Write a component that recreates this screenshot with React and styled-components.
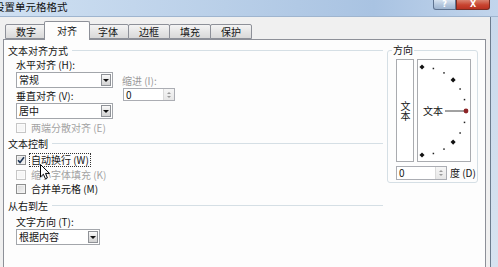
import React from "react";
import styled, { createGlobalStyle } from "styled-components";

const GlobalStyle = createGlobalStyle`
  html, body {
    margin: 0;
    padding: 0;
    background: #f0f0f0;
  }
  body {
    font-family: "Noto Sans CJK SC", "Liberation Sans", sans-serif;
    font-size: 10px;
    color: #141414;
  }
`;

const Window = styled.div`
  position: relative;
  width: 498px;
  height: 267px;
  overflow: hidden;
  display: flex;
  flex-direction: column;
  background: #f0f0f0;
`;

const TitleBar = styled.div`
  flex: none;
  height: 17px;
  display: flex;
  align-items: flex-start;
  background: linear-gradient(to right, #cfe0f2 0%, #b9cfe8 45%, #a9c3e2 75%, #c2d5ec 100%);
  border-bottom: 1px solid #9fb5cf;
  box-sizing: border-box;
`;

const Title = styled.div`
  flex: 1;
  margin-left: -6px;
  line-height: 13px;
  font-size: 10.5px;
  color: #111;
`;

const CaptionButton = styled.div`
  height: 10px;
  width: ${p => p.$w}px;
  box-sizing: border-box;
  border: 1px solid ${p => (p.$close ? "#7a2c22" : "#5f7390")};
  border-top: none;
  border-radius: ${p => (p.$close ? "0 0 3px 0" : "0 0 0 3px")};
  background: ${p =>
    p.$close
      ? "linear-gradient(#d9826f, #c8432f 55%, #b83222)"
      : "linear-gradient(#d6e2f0, #b3c6dd 55%, #9fb5d0)"};
  color: #fff;
  font-family: "DejaVu Sans", sans-serif;
  font-size: 8px;
  font-weight: bold;
  line-height: 9px;
  text-align: center;
  margin-right: ${p => (p.$close ? 8 : 0)}px;
`;

const Body = styled.div`
  flex: 1;
  display: flex;
  min-height: 0;
`;

const Main = styled.div`
  width: 490px;
  box-sizing: border-box;
  padding: 4px 4px 0 3px;
  display: flex;
  flex-direction: column;
`;

const RightFrame = styled.div`
  flex: 1;
  border-left: 1px solid #6c7c8e;
  background: linear-gradient(#c9d9eb, #d7e3f0);
`;

const TabStrip = styled.div`
  display: flex;
  align-items: flex-end;
  height: 18px;
  padding-left: 2px;
`;

const Tab = styled.div`
  position: relative;
  box-sizing: border-box;
  width: ${p => (p.$active ? 46 : 42)}px;
  height: ${p => (p.$active ? 19 : 15)}px;
  margin: ${p => (p.$active ? "0 -2px -1px -3px" : "0 0 0 -1px")};
  z-index: ${p => (p.$active ? 2 : 1)};
  border: 1px solid #8d9098;
  border-bottom: ${p => (p.$active ? "none" : "1px solid #8d9098")};
  border-radius: 2px 2px 0 0;
  background: ${p =>
    p.$active ? "#fdfdfd" : "linear-gradient(#f4f4f4, #e6e6e6 50%, #d9d9d9)"};
  display: flex;
  justify-content: center;
  align-items: ${p => (p.$active ? "flex-start" : "center")};
  padding-top: ${p => (p.$active ? 3 : 0)}px;
  line-height: 12px;
  &:first-child {
    margin-left: 0;
  }
`;

const Panel = styled.div`
  flex: 1;
  display: flex;
  border: 1px solid #8d9098;
  border-bottom: none;
  background: #fdfdfd;
  padding: 3px 0 0 4px;
`;

const LeftCol = styled.div`
  width: 375px;
  display: flex;
  flex-direction: column;
`;

const GroupHeader = styled.div`
  display: flex;
  align-items: center;
  height: 14px;
  gap: 4px;
  margin-top: ${p => p.$mt || 0}px;
  &::after {
    content: "";
    flex: 1;
    height: 1px;
    background: #d5dfe5;
  }
`;

const GroupBody = styled.div`
  padding-left: 8px;
  display: flex;
  flex-direction: column;
`;

const AlignRow = styled.div`
  display: flex;
`;

const Stack = styled.div`
  display: flex;
  flex-direction: column;
  padding-top: ${p => p.$pt || 0}px;
  margin-left: ${p => p.$ml || 0}px;
`;

const Label = styled.div`
  height: ${p => p.$h || 15}px;
  line-height: ${p => p.$h || 15}px;
  margin-top: ${p => p.$mt || 0}px;
  white-space: nowrap;
  color: ${p => (p.$muted ? "#9a9a9a" : "inherit")};
`;

const Field = styled.div`
  width: ${p => p.$w}px;
  height: 16px;
  box-sizing: border-box;
  border: 1px solid #a3a6ab;
  background: #fff;
  display: flex;
  align-items: center;
  padding-left: 2px;
`;

const FieldValue = styled.span`
  flex: 1;
  line-height: 14px;
`;

const DropButton = styled.div`
  width: 10px;
  height: 12px;
  margin-right: 1px;
  box-sizing: border-box;
  border: 1px solid #8f9297;
  background: linear-gradient(#fafafa, #e4e4e4 50%, #d3d3d3);
  display: flex;
  align-items: center;
  justify-content: center;
  &::before {
    content: "";
    border-left: 3px solid transparent;
    border-right: 3px solid transparent;
    border-top: 3px solid #111;
  }
`;

const SpinBox = styled.div`
  width: ${p => p.$w}px;
  height: ${p => p.$h}px;
  margin-left: ${p => p.$ml || 0}px;
  box-sizing: border-box;
  border: 1px solid #abadb3;
  background: #fff;
  display: flex;
  align-items: center;
  padding-left: 2px;
`;

const SpinArrows = styled.div`
  width: 11px;
  height: 100%;
  box-sizing: border-box;
  border-left: 1px solid #dadada;
  background: linear-gradient(#f6f6f6, #e6e6e6);
  display: flex;
  flex-direction: column;
  align-items: center;
  justify-content: center;
  gap: 2px;
`;

const Arrow = styled.span`
  width: 0;
  height: 0;
  border-left: 2.5px solid transparent;
  border-right: 2.5px solid transparent;
  ${p =>
    p.$up
      ? "border-bottom: 2.5px solid #9a9a9a;"
      : "border-top: 2.5px solid #9a9a9a;"}
`;

const CheckRow = styled.div`
  display: flex;
  align-items: center;
  gap: 4px;
  height: 14px;
  margin-top: ${p => p.$mt || 0}px;
  color: ${p => (p.$disabled ? "#a3a3a3" : "inherit")};
`;

const Box = styled.span`
  width: 10px;
  height: 10px;
  box-sizing: border-box;
  border: 1px solid ${p => (p.$disabled ? "#c6c6c6" : "#8e8f8f")};
  background: ${p =>
    p.$disabled ? "#f6f6f6" : "linear-gradient(135deg, #d8d8d8, #f5f5f5)"};
  box-shadow: inset 0 0 0 1px ${p => (p.$disabled ? "#fbfbfb" : "#f2f2f2")};
  display: flex;
  align-items: center;
  justify-content: center;
`;

const CheckText = styled.span`
  line-height: 12px;
  padding: 0 1px;
  margin-left: -1px;
  border: 1px dotted ${p => (p.$focus ? "#333" : "transparent")};
`;

const OrientGroup = styled.fieldset`
  margin: 0 0 0 4px;
  width: 91px;
  height: 140px;
  box-sizing: border-box;
  border: 1px solid #d5dfe5;
  border-radius: 3px;
  padding: 2px 0 3px 8px;
  align-self: flex-start;
`;

const Legend = styled.legend`
  padding: 0 1px;
  margin-left: -4px;
  line-height: 14px;
  font-size: 10px;
`;

const OrientRow = styled.div`
  display: flex;
  gap: 3px;
`;

const VerticalBox = styled.div`
  width: 18px;
  height: 103px;
  box-sizing: border-box;
  border: 1px solid #a9abaf;
  background: #fff;
  display: flex;
  align-items: center;
  justify-content: center;
`;

const VerticalText = styled.span`
  writing-mode: vertical-rl;
  line-height: 12px;
`;

const ArcBox = styled.div`
  width: 54px;
  height: 103px;
  box-sizing: border-box;
  border: 1px solid #a9abaf;
  background: #fff;
  svg {
    display: block;
  }
`;

const DegreeRow = styled.div`
  display: flex;
  align-items: center;
  margin-top: 3px;
  gap: 3px;
`;

const Cursor = styled.svg`
  position: absolute;
  left: 40px;
  top: 164px;
`;

const tabs = ["数字", "对齐", "字体", "边框", "填充", "保护"];

function Select({ width, value }) {
  return (
    <Field $w={width}>
      <FieldValue>{value}</FieldValue>
      <DropButton />
    </Field>
  );
}

function Spin({ width, height, value, ml }) {
  return (
    <SpinBox $w={width} $h={height} $ml={ml}>
      <FieldValue>{value}</FieldValue>
      <SpinArrows>
        <Arrow $up />
        <Arrow />
      </SpinArrows>
    </SpinBox>
  );
}

function Check({ label, checked, disabled, focus, mt }) {
  return (
    <CheckRow $disabled={disabled} $mt={mt}>
      <Box $disabled={disabled}>
        {checked && (
          <svg width="8" height="8" viewBox="0 0 8 8">
            <path d="M1 4.2 L3 6.4 L7 1.2" fill="none" stroke="#1d3557" strokeWidth="1.6" />
          </svg>
        )}
      </Box>
      <CheckText $focus={focus}>{label}</CheckText>
    </CheckRow>
  );
}

function Dial() {
  const cx = 4;
  const cy = 51;
  const r = 44;
  const dots = [];
  for (let a = -90; a <= 90; a += 15) {
    if (a === 0) continue;
    const rad = (a * Math.PI) / 180;
    const x = cx + r * Math.cos(rad);
    const y = cy - r * Math.sin(rad);
    const big = a % 45 === 0;
    dots.push(
      big ? (
        <rect key={a} x={x - 1.8} y={y - 1.8} width="3.6" height="3.6" fill="#111" transform={`rotate(45 ${x} ${y})`} />
      ) : (
        <rect key={a} x={x - 0.75} y={y - 0.75} width="1.5" height="1.5" fill="#222" />
      )
    );
  }
  return (
    <svg width="52" height="101" viewBox="0 0 52 101">
      {dots}
      <text x="5" y="55" fontSize="10" fill="#111" fontFamily="Noto Sans CJK SC, sans-serif">
        文本
      </text>
      <line x1="27" y1="51" x2="46" y2="51" stroke="#444" strokeWidth="1" />
      <circle cx="48" cy="51" r="2.4" fill="#8c2426" />
    </svg>
  );
}

export default function App() {
  return (
    <Window>
      <GlobalStyle />
      <TitleBar>
        <Title>设置单元格格式</Title>
        <CaptionButton $w={23}>?</CaptionButton>
        <CaptionButton $w={34} $close>
          X
        </CaptionButton>
      </TitleBar>
      <Body>
        <Main>
          <TabStrip>
            {tabs.map(t => (
              <Tab key={t} $active={t === "对齐"}>
                {t}
              </Tab>
            ))}
          </TabStrip>
          <Panel>
            <LeftCol>
              <GroupHeader>文本对齐方式</GroupHeader>
              <GroupBody>
                <AlignRow>
                  <Stack>
                    <Label>水平对齐 (H):</Label>
                    <Select width={97} value="常规" />
                    <Label>垂直对齐 (V):</Label>
                    <Select width={97} value="居中" />
                  </Stack>
                  <Stack $pt={17} $ml={9}>
                    <Label $h={14} $muted>
                      缩进 (I):
                    </Label>
                    <Spin width={52} height={13} value="0" ml={1} />
                  </Stack>
                </AlignRow>
                <Check label="两端分散对齐 (E)" disabled mt={2} />
              </GroupBody>
              <GroupHeader $mt={1}>文本控制</GroupHeader>
              <GroupBody>
                <Check label="自动换行 (W)" checked focus mt={3} />
                <Check label="缩小字体填充 (K)" disabled mt={1} />
                <Check label="合并单元格 (M)" />
              </GroupBody>
              <GroupHeader $mt={2}>从右到左</GroupHeader>
              <GroupBody>
                <Label $h={14} $mt={3}>
                  文字方向 (T):
                </Label>
                <Select width={84} value="根据内容" />
              </GroupBody>
            </LeftCol>
            <OrientGroup>
              <Legend>方向</Legend>
              <OrientRow>
                <VerticalBox>
                  <VerticalText>文本</VerticalText>
                </VerticalBox>
                <ArcBox>
                  <Dial />
                </ArcBox>
              </OrientRow>
              <DegreeRow>
                <Spin width={51} height={14} value="0" />
                <span>度 (D)</span>
              </DegreeRow>
            </OrientGroup>
          </Panel>
        </Main>
        <RightFrame />
      </Body>
      <Cursor width="11" height="16" viewBox="0 0 11 16">
        <path
          d="M0.5 0.5 V13 L3.4 10.2 L5.4 14.8 L7.4 13.9 L5.5 9.4 H9.5 Z"
          fill="#fff"
          stroke="#000"
          strokeWidth="1"
          strokeLinejoin="round"
        />
      </Cursor>
    </Window>
  );
}
